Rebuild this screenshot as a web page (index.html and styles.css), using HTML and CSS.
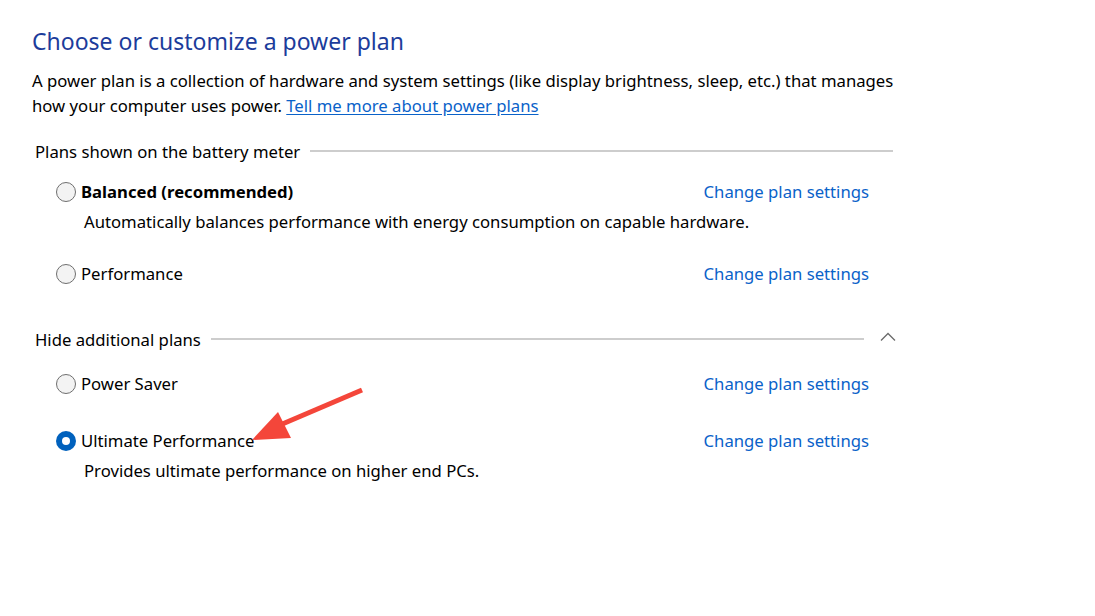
FILE: index.html
```html
<!DOCTYPE html>
<html>
<head>
<meta charset="utf-8">
<link rel="stylesheet" href="styles.css">
</head>
<body>
<div class="page">
  <h1 class="title">Choose or customize a power plan</h1>
  <p class="intro">A power plan is a collection of hardware and system settings (like display brightness, sleep, etc.) that manages how your computer uses power. <a class="link" href="#">Tell me more about power plans</a></p>

  <section class="group">
    <div class="group-head">
      <span class="group-title">Plans shown on the battery meter</span>
      <span class="rule"></span>
    </div>
    <div class="plans">
      <div class="plan">
        <div class="plan-row">
          <span class="radio"></span>
          <span class="plan-name bold">Balanced (recommended)</span>
          <a class="change" href="#">Change plan settings</a>
        </div>
        <div class="plan-desc">Automatically balances performance with energy consumption on capable hardware.</div>
      </div>
      <div class="plan">
        <div class="plan-row">
          <span class="radio"></span>
          <span class="plan-name">Performance</span>
          <a class="change" href="#">Change plan settings</a>
        </div>
      </div>
    </div>
  </section>

  <section class="group group-extra">
    <div class="group-head">
      <span class="group-title">Hide additional plans</span>
      <span class="rule"></span>
      <svg class="chevron" width="16" height="10" viewBox="0 0 16 10"><path d="M1 8.5 L8 1.5 L15 8.5" fill="none" stroke="#6b6b6b" stroke-width="1.3"/></svg>
    </div>
    <div class="plans">
      <div class="plan">
        <div class="plan-row">
          <span class="radio"></span>
          <span class="plan-name">Power Saver</span>
          <a class="change" href="#">Change plan settings</a>
        </div>
      </div>
      <div class="plan">
        <div class="plan-row">
          <span class="radio checked"></span>
          <span class="plan-name">Ultimate Performance</span>
          <a class="change" href="#">Change plan settings</a>
        </div>
        <div class="plan-desc">Provides ultimate performance on higher end PCs.</div>
      </div>
    </div>
  </section>

  <svg class="arrow" width="1095" height="616" viewBox="0 0 1095 616">
    <line x1="362" y1="390" x2="280" y2="425" stroke="#f4463a" stroke-width="5" stroke-linecap="butt"/>
    <polygon points="252,440 278,412 291,438" fill="#f4463a"/>
  </svg>
</div>
</body>
</html>
```
FILE: styles.css
```css
html, body {
  margin: 0;
  padding: 0;
  background: #ffffff;
}
body {
  font-family: "Noto Sans", "Open Sans", sans-serif;
  color: #000000;
  font-size: 16.7px;
}
.page {
  position: relative;
  width: 1095px;
  height: 616px;
  padding: 26px 0 0 32px;
  box-sizing: border-box;
}
.title {
  margin: 0;
  font-size: 23px;
  line-height: 30px;
  font-weight: 400;
  color: #1c3c9b;
}
.intro {
  margin: 12px 0 0 0;
  width: 885px;
  font-size: 16.7px;
  line-height: 25px;
}
.link {
  color: #0a62c9;
  text-decoration: underline;
  text-underline-offset: 2px;
}
.group {
  width: 861px;
  margin-top: 18px;
}
.group-extra {
  margin-top: 9px;
}
.group-head {
  display: flex;
  align-items: center;
  height: 30px;
  padding-left: 3px;
}
.group-title {
  white-space: nowrap;
  margin-right: 10px;
}
.rule {
  flex: 1;
  height: 2px;
  background: #cdcdcd;
  margin-top: -1px;
}
.chevron {
  margin-left: 16px;
  margin-right: -3px;
  margin-top: -4px;
}
.plans {
  padding: 10px 24px 0 24px;
}
.group-extra .plans {
  padding-top: 14px;
}
.plan {
  min-height: 57px;
  padding-bottom: 21px;
  box-sizing: border-box;
}
.plan-row {
  display: flex;
  align-items: center;
  height: 30px;
}
.radio {
  width: 18px;
  height: 18px;
  border: 1px solid #6e6e6e;
  border-radius: 50%;
  background: #f3f3f3;
  margin-right: 5px;
  margin-top: 2px;
  flex: none;
}
.radio.checked {
  width: 20px;
  height: 20px;
  border: none;
  background: #0061bd;
  display: flex;
  align-items: center;
  justify-content: center;
}
.radio.checked::after {
  content: "";
  width: 8px;
  height: 8px;
  border-radius: 50%;
  background: #ffffff;
}
.plan-name {
  flex: 1;
}
.bold {
  font-weight: 700;
}
.change {
  color: #0a62c9;
  text-decoration: none;
}
.plan-desc {
  padding-left: 28px;
  padding-top: 1px;
  line-height: 30px;
}
.arrow {
  position: absolute;
  left: 0;
  top: 0;
  pointer-events: none;
}
```
